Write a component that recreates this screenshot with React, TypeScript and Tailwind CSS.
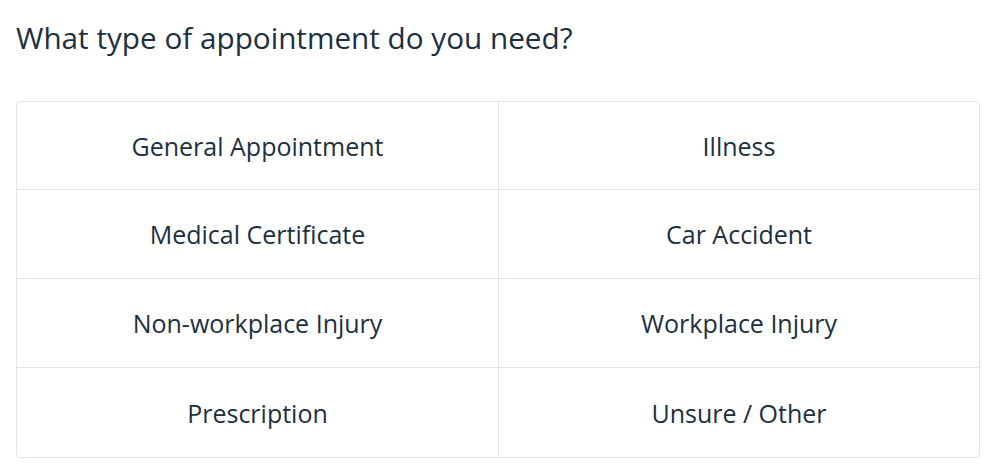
import React from "react";

const items = [
  "General Appointment",
  "Illness",
  "Medical Certificate",
  "Car Accident",
  "Non-workplace Injury",
  "Workplace Injury",
  "Prescription",
  "Unsure / Other",
];

export default function App() {
  return (
    <div
      className="w-[1000px] h-[475px] bg-white text-[#1d2f40] pl-[16px] pt-[17px]"
      style={{ fontFamily: '"Open Sans", sans-serif' }}
    >
      <h1 className="text-[29.7px] leading-[42px] font-normal">
        What type of appointment do you need?
      </h1>
      <div className="mt-[42px] w-[964px] grid grid-cols-[482px_1fr] border border-[#e1e5ea] rounded-[4px]">
        {items.map((t, i) => (
          <div
            key={t}
            className={
              "flex items-center justify-center pt-[2px] text-[25px] " +
              (i < 2 ? "h-[88px] " : "h-[89px] ") +
              (i % 2 === 0 ? "border-r border-[#e1e5ea] " : "") +
              (i < 6 ? "border-b border-[#e1e5ea]" : "")
            }
          >
            {t}
          </div>
        ))}
      </div>
    </div>
  );
}
